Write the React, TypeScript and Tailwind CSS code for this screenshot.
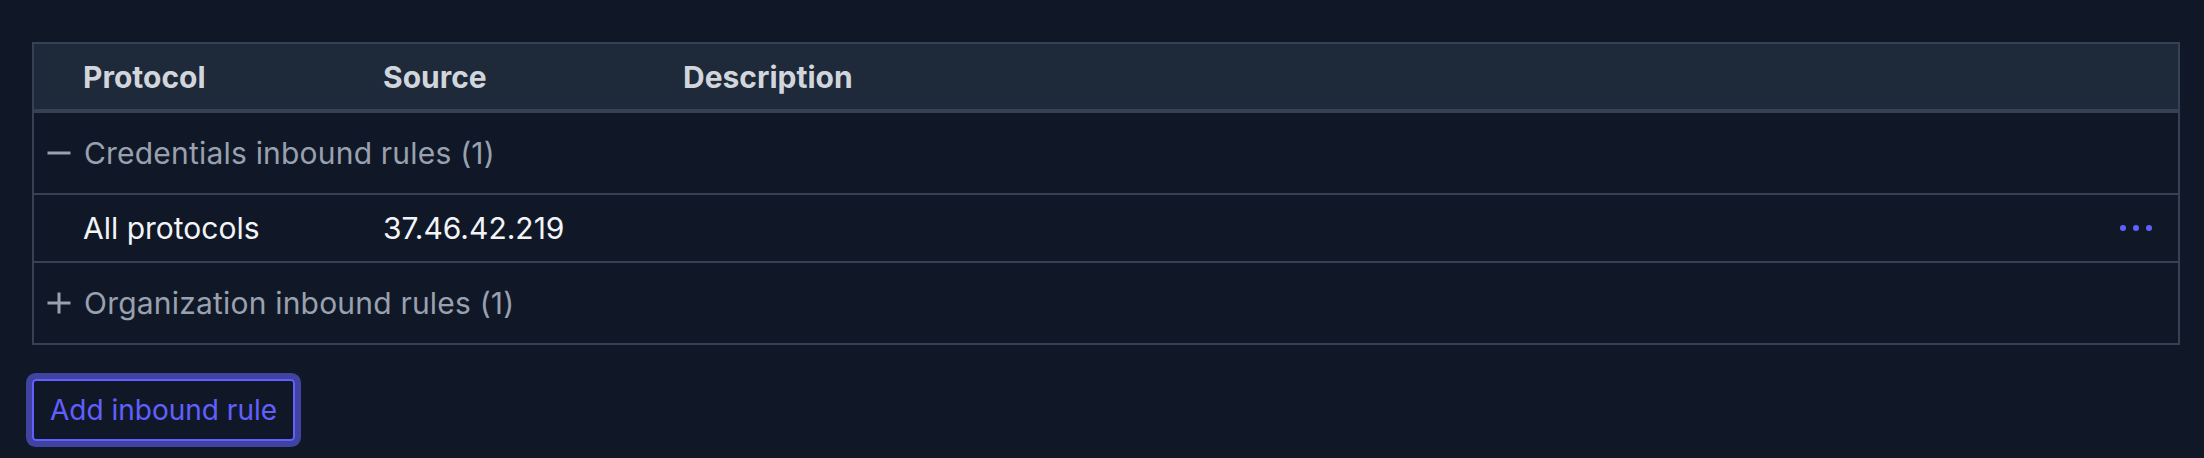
import React from 'react'

const font = { fontFamily: 'Inter, "Noto Sans", sans-serif' }

function MinusIcon() {
  return (
    <svg width="24" height="24" viewBox="0 0 24 24" className="text-gray-400">
      <path d="M0.5 12h23" stroke="currentColor" strokeWidth="3" />
    </svg>
  )
}

function PlusIcon() {
  return (
    <svg width="24" height="24" viewBox="0 0 24 24" className="text-gray-400">
      <path d="M0.5 12h23M12 1.5v21" stroke="currentColor" strokeWidth="3" />
    </svg>
  )
}

function Dots() {
  return (
    <button className="flex items-center gap-[7px] px-1">
      <span className="w-[6px] h-[6px] rounded-full bg-indigo-500" />
      <span className="w-[6px] h-[6px] rounded-full bg-indigo-500" />
      <span className="w-[6px] h-[6px] rounded-full bg-indigo-500" />
    </button>
  )
}

function GroupRow({ open, label }: { open: boolean; label: string }) {
  return (
    <div className="flex items-center h-[80px] pl-[13px] gap-[13px]">
      {open ? <MinusIcon /> : <PlusIcon />}
      <span className="text-[30px] leading-none tracking-[0.2px] text-gray-400">{label}</span>
    </div>
  )
}

export default function App() {
  return (
    <div className="min-h-screen bg-gray-900 pt-[42px] pl-[32px] pr-[24px]" style={font}>
      <div className="border-2 border-gray-700">
        <div className="grid grid-cols-[300px_300px_1fr] items-center h-[69px] bg-gray-800 border-b-4 border-gray-700 text-[30px] leading-none font-bold text-gray-300">
          <div className="pl-[49px]">Protocol</div>
          <div className="pl-[49px]">Source</div>
          <div className="pl-[49px]">Description</div>
        </div>
        <div className="border-b-2 border-gray-700">
          <GroupRow open label="Credentials inbound rules (1)" />
        </div>
        <div className="grid grid-cols-[300px_300px_1fr_auto] items-center h-[68px] border-b-2 border-gray-700 text-[30px] leading-none text-gray-100">
          <div className="pl-[49px]">All protocols</div>
          <div className="pl-[49px]">37.46.42.219</div>
          <div className="pl-[49px]" />
          <div className="pr-[22px]">
            <Dots />
          </div>
        </div>
        <GroupRow open={false} label="Organization inbound rules (1)" />
      </div>
      <div className="pt-[34px] pb-[12px]">
        <button className="h-[62px] px-[16px] rounded-[4px] border-2 border-indigo-500 ring-[6px] ring-[#4044a0] text-[28px] text-indigo-500">
          Add inbound rule
        </button>
      </div>
    </div>
  )
}
